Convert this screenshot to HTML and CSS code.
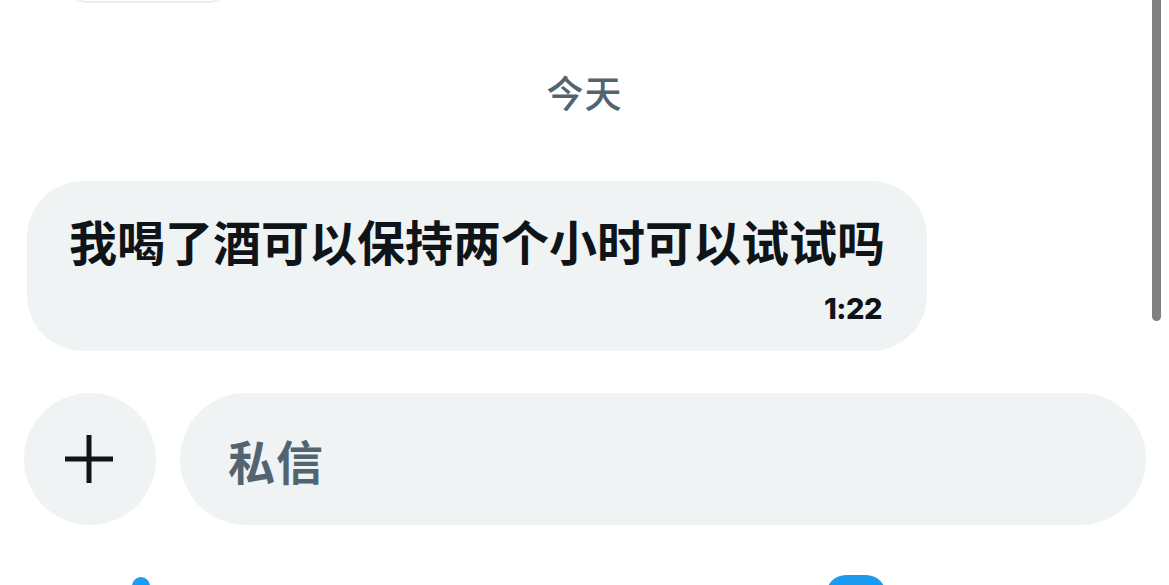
FILE: index.html
```html
<!DOCTYPE html>
<html lang="zh">
<head>
<meta charset="utf-8">
<link rel="stylesheet" href="styles.css">
</head>
<body>
<div class="page">
  <div class="top-card"></div>
  <div class="date">今天</div>
  <div class="bubble">
    <div class="msg">我喝了酒可以保持两个小时可以试试吗</div>
    <div class="time">1:22</div>
  </div>
  <div class="composer">
    <div class="plus">
      <svg width="50" height="50" viewBox="0 0 50 50"><path d="M25 1v48M1 25h48" stroke="#0f1419" stroke-width="5" fill="none"/></svg>
    </div>
    <div class="input">私信</div>
  </div>
  <div class="bottom-bar">
    <span class="dot"></span>
    <span class="pill"></span>
  </div>
  <div class="scrollbar"></div>
</div>
</body>
</html>
```
FILE: styles.css
```css
html, body {
  margin: 0;
  padding: 0;
  background: #ffffff;
}
.page {
  position: relative;
  width: 1169px;
  height: 585px;
  overflow: hidden;
  font-family: "Noto Sans CJK SC", "Noto Sans", sans-serif;
  padding-top: 70px;
  box-sizing: border-box;
}
.top-card {
  position: absolute;
  left: 72px;
  top: -40px;
  width: 152px;
  height: 41px;
  background: #fff;
  border-radius: 0 0 14px 14px;
  box-shadow: 0 1px 3px rgba(0,0,0,0.14);
}
.date {
  text-align: center;
  font-size: 37px;
  line-height: 44px;
  font-weight: 500;
  color: #536471;
  letter-spacing: 1px;
}
.bubble {
  width: fit-content;
  margin: 67px 0 0 27px;
  padding: 28px 42px 25px 42px;
  background: #eff3f4;
  border-radius: 56px;
}
.msg {
  font-size: 48px;
  line-height: 62px;
  font-weight: 700;
  color: #0f1419;
}
.time {
  margin-top: 21px;
  text-align: right;
  font-family: Inter, Roboto, "Liberation Sans", sans-serif;
  font-weight: 800;
  font-size: 29px;
  line-height: 34px;
  color: #0f1419;
  padding-right: 3px;
  letter-spacing: -0.5px;
}
.composer {
  display: flex;
  align-items: center;
  gap: 24px;
  margin: 42px 23px 0 24px;
}
.plus {
  width: 132px;
  height: 132px;
  flex: 0 0 132px;
  border-radius: 50%;
  background: #eff3f4;
  display: flex;
  align-items: center;
  justify-content: center;
}
.plus svg {
  margin-left: -2px;
}
.input {
  flex: 1;
  height: 132px;
  border-radius: 66px;
  background: #eff3f4;
  display: flex;
  align-items: center;
  padding-left: 48px;
  font-size: 47px;
  font-weight: 600;
  color: #536471;
  letter-spacing: 1px;
}
.bottom-bar {
  display: flex;
  align-items: flex-start;
  margin-top: 50px;
  height: 40px;
}
.dot {
  width: 18px;
  height: 30px;
  margin-left: 132px;
  margin-top: 2px;
  border-radius: 9px;
  background: #1d9bf0;
}
.pill {
  width: 60px;
  height: 40px;
  margin-left: 676px;
  border-radius: 22px;
  background: #1d9bf0;
}
.scrollbar {
  position: absolute;
  right: 8px;
  top: -10px;
  width: 9px;
  height: 331px;
  border-radius: 5px;
  background: #808080;
}
```
